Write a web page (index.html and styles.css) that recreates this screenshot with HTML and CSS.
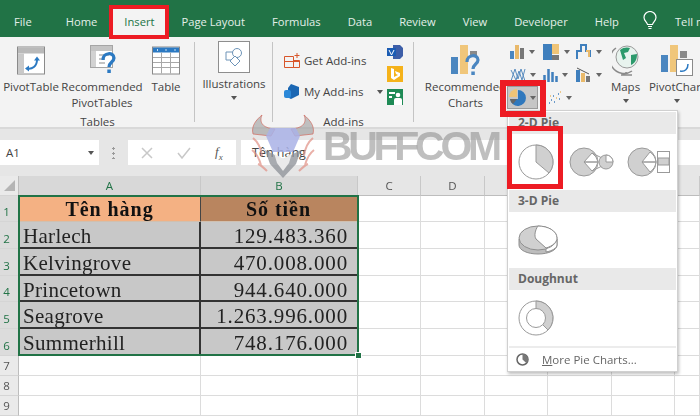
FILE: index.html
```html
<!DOCTYPE html>
<html lang="vi">
<head>
<meta charset="utf-8">
<title>Excel Insert Pie Chart</title>
<link rel="stylesheet" href="styles.css">
</head>
<body>
<div class="app">
  <nav class="tabs">
    <span class="tab tab-file">File</span>
    <span class="tab">Home</span>
    <span class="tab tab-active">Insert</span>
    <span class="tab">Page Layout</span>
    <span class="tab">Formulas</span>
    <span class="tab">Data</span>
    <span class="tab">Review</span>
    <span class="tab">View</span>
    <span class="tab">Developer</span>
    <span class="tab">Help</span>
    <svg class="bulb" width="14" height="20" viewBox="0 0 14 20"><path d="M4.500 13.500C4 11 1 9.500 1 6.500a6 6 0 0 1 12 0c0 3-3 4.500-3.500 7z" fill="none" stroke="#fff" stroke-width="1.200"/><path d="M5 15.500h4M5.500 17.500h3" stroke="#fff" stroke-width="1.200"/></svg>
    <span class="tab tab-tell">Tell me</span>
  </nav>

  <section class="ribbon">
    <div class="group group-tables">
      <div class="group-body">
        <div class="btn btn-pivot">
          <svg width="28" height="28" viewBox="0 0 28 28"><rect x=".5" y=".5" width="27" height="27" fill="#fff" stroke="#8a8a8a"/><rect x="1" y="1" width="26" height="6" fill="#b9b9b9"/><rect x="1" y="7" width="6" height="20" fill="#c9c9c9"/><path d="M10 22c5 1 10-2 10-9" fill="none" stroke="#2b79c2" stroke-width="2"/><path d="M17 14l3-4 3 4zM12 19l-4 3 4 3z" fill="#2b79c2"/></svg>
          <span class="btn-text">PivotTable</span>
        </div>
        <div class="btn btn-rec">
          <svg width="30" height="31" viewBox="0 0 30 31"><rect x="3.500" y=".5" width="22" height="22" fill="#fff" stroke="#a5a5a5"/><rect x="4" y="1" width="21" height="5" fill="#c4c4c4"/><rect x="4" y="6" width="5" height="16" fill="#d2d2d2"/><path d="M12 10h10M12 14h6M12 18h6" stroke="#c4c4c4" stroke-width="2"/><path d="M16 15c0-8 11-8 11-2 0 4-5 4-5 9" fill="none" stroke="#2b79c2" stroke-width="3.200"/><rect x="20.300" y="24.500" width="3.500" height="3.500" fill="#2b79c2"/></svg>
          <span class="btn-text">Recommended<br>PivotTables</span>
        </div>
        <div class="btn btn-table">
          <svg width="28" height="28" viewBox="0 0 28 28"><rect x=".5" y=".5" width="27" height="27" fill="#fff" stroke="#8a8a8a"/><rect x="1" y="1" width="26" height="5" fill="#2b79c2"/><path d="M1 11h26M1 16h26M1 21h26M9.500 6v21M18.500 6v21" stroke="#a8a8a8"/><path d="M5 3.500h1M13.500 3.500h1M22.500 3.500h1" stroke="#fff" stroke-width="1.500"/></svg>
          <span class="btn-text">Table</span>
        </div>
      </div>
      <div class="group-label">Tables</div>
    </div>

    <div class="group group-illus">
      <div class="btn btn-illus">
        <span class="illus-box"><svg width="20" height="20" viewBox="0 0 20 20"><path d="M2 5h9v8H2z" fill="#fff" stroke="#6e94b8"/><circle cx="13" cy="6" r="4.500" fill="#fff" stroke="#6e94b8"/><path d="M11 9l5 5-5 5-5-5z" fill="#fff" stroke="#6e94b8"/></svg></span>
        <span class="btn-text">Illustrations</span>
        <span class="caret caret-drop"></span>
      </div>
    </div>

    <div class="group group-addins">
      <div class="group-body addins-body">
        <div class="addins-list">
          <div class="addin">
            <svg width="17" height="15" viewBox="0 0 17 15"><path d="M.5 3.500h9v11h-9zM9.500 7.500h6v7h-6zM.5 8.500h15" fill="none" stroke="#d8562a"/><path d="M13 0v5M10.500 2.500h5" stroke="#d8562a"/></svg>
            <span>Get Add-ins</span>
          </div>
          <div class="addin">
            <svg width="17" height="15" viewBox="0 0 17 15"><path d="M7 0l8 3v8l-8 4-3-1.500V4z" fill="#1b67b3"/><rect x="0" y="6" width="7" height="8" rx="2" fill="#2b88d8"/></svg>
            <span>My Add-ins</span>
            <span class="caret caret-addin"></span>
          </div>
        </div>
        <div class="addin-apps">
          <svg width="16" height="14" viewBox="0 0 16 14"><path d="M6 0h7l3 3v8l-3 3H6z" fill="#3d5ea8"/><rect y="3" width="9" height="8" fill="#1b5cb3"/><path d="M2 5l2.500 5L7 5" stroke="#fff" fill="none"/></svg>
          <svg width="16" height="16" viewBox="0 0 16 16"><rect width="16" height="16" fill="#f5b21a"/><path d="M4 2l3 1v8l4-2-2-1-1-3 5 2v3l-6 4-3-2z" fill="#fff"/></svg>
          <svg width="16" height="16" viewBox="0 0 16 16"><rect width="16" height="16" fill="#1e8a55"/><rect x="2" y="3" width="6" height="2" fill="#fff"/><circle cx="11" cy="6" r="2.300" fill="#fff"/><path d="M7 16v-5a2 2 0 0 1 2-2h4a2 2 0 0 1 2 2v5z" fill="#fff"/><rect x="2" y="7" width="3" height="2" fill="#fff"/></svg>
        </div>
      </div>
      <div class="group-label">Add-ins</div>
    </div>

    <div class="group-charts">
      <div class="btn btn-reccharts">
        <svg width="30" height="31" viewBox="0 0 30 31"><rect x="0" y="12" width="7" height="17" fill="#4a86c0"/><rect x="9" y="0" width="8" height="29" fill="#f0c67a"/><rect x="19" y="6" width="7" height="5" fill="#8a8a8a"/><path d="M16 17c0-8 11-8 11-2 0 4-5 4-5 9" fill="none" stroke="#4a86c0" stroke-width="3.200"/><rect x="20.300" y="26.500" width="3.500" height="3.500" fill="#4a86c0"/></svg>
        <span class="btn-text">Recommended<br>Charts</span>
      </div>
      <div class="gallery">
        <div class="mini"><svg width="15" height="14" viewBox="0 0 15 14"><rect y="6" width="4" height="8" fill="#4a86c0"/><rect x="5" y="0" width="4" height="14" fill="#e9b96a"/><rect x="10" y="3" width="4" height="11" fill="#777"/></svg><span class="caret"></span></div>
        <div class="mini"><svg width="17" height="16" viewBox="0 0 17 16"><rect width="9" height="16" fill="#3f7fbd"/><rect x="9" width="7" height="10" fill="#efc477"/><rect x="9" y="11" width="7" height="5" fill="#777"/></svg><span class="caret"></span></div>
        <div class="mini"><svg width="16" height="15" viewBox="0 0 16 15"><path d="M1 15V7h4V1h5v6h4v6" fill="none" stroke="#3f7fbd" stroke-width="2"/><path d="M10 7h3v6" fill="none" stroke="#e9b96a" stroke-width="2"/></svg><span class="caret"></span></div>
        <div class="mini"><svg width="16" height="15" viewBox="0 0 16 15"><path d="M1 14L5 2l3 10 3-10 4 12M1 3l5 10 3-9 3 9 3-11" fill="none" stroke="#5a8dc0"/></svg><span class="caret"></span></div>
        <div class="mini"><svg width="15" height="14" viewBox="0 0 15 14"><path d="M1.500 14V7M5.500 14V1M9.500 14V4M13.500 14V8" stroke="#3f7fbd" stroke-width="2.500"/></svg><span class="caret"></span></div>
        <div class="mini"><svg width="16" height="15" viewBox="0 0 16 15"><rect y="3" width="4" height="12" fill="#3f7fbd"/><rect x="5" y="6" width="4" height="9" fill="#e9b96a"/><rect x="10" y="9" width="4" height="6" fill="#777"/><path d="M1 1l12 6" stroke="#555"/></svg><span class="caret"></span></div>
        <div class="mini mini-pie"><svg width="18" height="17" viewBox="0 0 18 17"><path d="M9 1a8 8 0 1 1-8 9h8z" fill="#2f78bd"/><path d="M8 0v8H0a8 8 0 0 1 8-8z" fill="#efc477"/><path d="M1 10h7l-4 5a8 8 0 0 1-3-5z" fill="#666"/></svg><span class="caret"></span></div>
        <div class="mini"><svg width="14" height="13" viewBox="0 0 14 13"><path d="M3 9h1M6 11h1M5 5h1M10 3h1M11 8h1M1 12h1" stroke="#3f7fbd" stroke-width="1.500"/><path d="M8 7h1M2 5h1M12 1h1" stroke="#e9b96a" stroke-width="1.500"/></svg><span class="caret"></span></div>
      </div>
      <div class="btn btn-maps">
        <svg width="28" height="31" viewBox="0 0 28 31"><circle cx="15" cy="12" r="11" fill="#e8f3ee" stroke="#9a9a9a"/><path d="M8 5c3-3 8-3 10-2l-2 4-4 1 2 5-3 2zM19 10l6-1c0 6-2 9-6 11z" fill="#2c9a6c"/><path d="M4 3a13 13 0 0 0 16 23M14 27v3M9 30h11" fill="none" stroke="#8a8a8a" stroke-width="1.500"/></svg>
        <span class="btn-text">Maps</span>
        <span class="caret caret-drop"></span>
      </div>
      <div class="btn btn-pchart">
        <svg width="32" height="31" viewBox="0 0 32 31"><rect y="10" width="7" height="17" fill="#4a86c0"/><rect x="9" width="8" height="27" fill="#f0c67a"/><rect x="19" y="6" width="7" height="7" fill="#8a8a8a"/><rect x="15.500" y="14.500" width="16" height="16" fill="#fff" stroke="#8a8a8a"/><path d="M19 26c5 1 8-2 8-7" fill="none" stroke="#2b79c2" stroke-width="1.500"/></svg>
        <span class="btn-text">PivotChart</span>
        <span class="caret caret-drop"></span>
      </div>
    </div>
  </section>

  <section class="formula-row">
    <div class="name-box"><span>A1</span><span class="caret"></span></div>
    <div class="dots"></div>
    <div class="fx-box">
      <svg width="12" height="12" viewBox="0 0 12 12"><path d="M1 1l10 10M11 1L1 11" stroke="#c8c8c8" stroke-width="1.500"/></svg>
      <svg width="14" height="12" viewBox="0 0 14 12"><path d="M1 6l4 5 8-10" fill="none" stroke="#c8c8c8" stroke-width="1.500"/></svg>
      <span class="fx">f<sub>x</sub></span>
    </div>
    <div class="formula-input">Tên hàng</div>
  </section>

  <section class="sheet">
    <div class="row row-head">
      <div class="rh corner"><span class="corner-tri"></span></div>
      <div class="ch ch-on col-a">A</div><div class="ch ch-on col-b">B</div><div class="ch">C</div><div class="ch">D</div><div class="ch"></div><div class="ch"></div><div class="ch"></div><div class="ch"></div>
    </div>
    <div class="row row-1">
      <div class="rh rh-on">1</div>
      <div class="c head-a">Tên hàng</div><div class="c head-b">Số tiền</div><div class="c"></div><div class="c"></div><div class="c"></div><div class="c"></div><div class="c"></div><div class="c"></div>
    </div>
    <div class="row row-d">
      <div class="rh rh-on">2</div>
      <div class="c name">Harlech</div><div class="c num">129.483.360</div><div class="c"></div><div class="c"></div><div class="c"></div><div class="c"></div><div class="c"></div><div class="c"></div>
    </div>
    <div class="row row-d">
      <div class="rh rh-on">3</div>
      <div class="c name">Kelvingrove</div><div class="c num">470.008.000</div><div class="c"></div><div class="c"></div><div class="c"></div><div class="c"></div><div class="c"></div><div class="c"></div>
    </div>
    <div class="row row-d">
      <div class="rh rh-on">4</div>
      <div class="c name">Princetown</div><div class="c num">944.640.000</div><div class="c"></div><div class="c"></div><div class="c"></div><div class="c"></div><div class="c"></div><div class="c"></div>
    </div>
    <div class="row row-d">
      <div class="rh rh-on">5</div>
      <div class="c name">Seagrove</div><div class="c num">1.263.996.000</div><div class="c"></div><div class="c"></div><div class="c"></div><div class="c"></div><div class="c"></div><div class="c"></div>
    </div>
    <div class="row row-d">
      <div class="rh rh-on">6</div>
      <div class="c name">Summerhill</div><div class="c num">748.176.000</div><div class="c"></div><div class="c"></div><div class="c"></div><div class="c"></div><div class="c"></div><div class="c"></div>
    </div>
    <div class="row row-e">
      <div class="rh">7</div><div class="c"></div><div class="c"></div><div class="c"></div><div class="c"></div><div class="c"></div><div class="c"></div><div class="c"></div><div class="c"></div>
    </div>
    <div class="row row-e">
      <div class="rh">8</div><div class="c"></div><div class="c"></div><div class="c"></div><div class="c"></div><div class="c"></div><div class="c"></div><div class="c"></div><div class="c"></div>
    </div>
    <div class="row row-e">
      <div class="rh">9</div><div class="c"></div><div class="c"></div><div class="c"></div><div class="c"></div><div class="c"></div><div class="c"></div><div class="c"></div><div class="c"></div>
    </div>
    <div class="selection"><span class="handle"></span></div>
  </section>

  <div class="watermark">
    <svg width="66" height="68" viewBox="0 0 66 68"><path d="M3 22C1 14 6 8 12 3c-3 7 0 13 13 14l-4 7zM63 22c2-8-3-14-9-19 3 7 0 13-13 14l4 7z" fill="#9c9c9c" fill-opacity=".6" stroke="#d06a5e" stroke-opacity=".7"/><path d="M20 16h26l4 8-7 16H23l-7-16z" fill="#a9b2e6" opacity=".85"/><path d="M15 38l18 9 18-9-5 14-13 14-13-14z" fill="#8b8f96" opacity=".75"/><path d="M24 41l9 6 9-6-3 10-6 8-6-8z" fill="#f2f2f2" opacity=".9"/><path d="M3 26c5 4 8 10 9 18M63 26c-5 4-8 10-9 18M2 38c4 3 7 8 9 15M64 38c-4 3-7 8-9 15M8 52c3 1 6 4 9 7M58 52c-3 1-6 4-9 7" fill="none" stroke="#e08e83" stroke-width="2" opacity=".7"/></svg>
    <span class="wm-text">BUFFCOM</span>
  </div>

  <aside class="pie-menu">
    <div class="menu-title">2-D Pie</div>
    <div class="menu-items">
      <svg width="36" height="36" viewBox="0 0 36 36"><circle cx="18" cy="18" r="17" fill="#fff" stroke="#9a9a9a"/><path d="M18 1a17 17 0 0 1 13 28L18 18z" fill="#d0d0d0" stroke="#9a9a9a"/></svg>
      <svg class="ofpie" width="45" height="30" viewBox="0 0 45 30"><circle cx="15" cy="15" r="14" fill="#d0d0d0" stroke="#9a9a9a"/><path d="M29 15L15 15l8-9a14 14 0 0 1 6 9zM23 24l-8-9h14a14 14 0 0 1-6 9z" fill="#fff" stroke="#9a9a9a"/><path d="M23 6l12 6M23 24l12-6" stroke="#9a9a9a"/><circle cx="37" cy="15" r="7" fill="#d0d0d0" stroke="#9a9a9a"/><path d="M37 15V8a7 7 0 0 1 7 7z" fill="#fff" stroke="#9a9a9a"/></svg>
      <svg class="barofpie" width="43" height="30" viewBox="0 0 43 30"><circle cx="15" cy="15" r="14" fill="#d0d0d0" stroke="#9a9a9a"/><path d="M29 15H15l8-10a14 14 0 0 1 6 10zM23 25l-8-10h14a14 14 0 0 1-6 10z" fill="#fff" stroke="#9a9a9a"/><rect x="30.500" y="4.500" width="12" height="21" fill="#fff" stroke="#9a9a9a"/><rect x="31" y="11" width="11" height="7" fill="#d0d0d0" stroke="#9a9a9a"/></svg>
    </div>
    <div class="menu-title">3-D Pie</div>
    <div class="menu-items">
      <svg width="40" height="30" viewBox="0 0 40 30"><path d="M1 14v6c0 5 8 9 19 9s19-4 19-9v-6z" fill="#bdbdbd" stroke="#8e8e8e"/><path d="M28 27c6-1 11-4 11-7v-6H28z" fill="#fff" stroke="#8e8e8e"/><ellipse cx="20" cy="13" rx="19" ry="12" fill="#d0d0d0" stroke="#8e8e8e"/><path d="M20 1c10 0 19 5 19 12 0 4-4 8-11 10l-10-9c-2-3-1-9 2-13z" fill="#fff" stroke="#8e8e8e"/></svg>
    </div>
    <div class="menu-title">Doughnut</div>
    <div class="menu-items">
      <svg width="36" height="36" viewBox="0 0 36 36"><circle cx="18" cy="18" r="17" fill="#fff" stroke="#9a9a9a"/><path d="M18 1a17 17 0 0 1 12 29l-6-6a9 9 0 0 0-6-15z" fill="#d0d0d0" stroke="#9a9a9a"/><circle cx="18" cy="18" r="9.500" fill="#fff" stroke="#9a9a9a"/></svg>
    </div>
    <div class="menu-more">
      <svg width="13" height="13" viewBox="0 0 13 13"><circle cx="6.500" cy="6.500" r="5.500" fill="#fff" stroke="#666" stroke-width="1.500"/><path d="M6.500 1a5.500 5.500 0 0 1 4 9.300L6.500 6.500z" fill="#777"/></svg>
      <span><u>M</u>ore Pie Charts...</span>
    </div>
  </aside>

  <div class="mark mark-insert"></div>
  <div class="mark mark-pie"></div>
  <div class="mark mark-item"></div>
</div>
</body>
</html>
```

FILE: styles.css
```css
* { box-sizing: border-box; }
html, body { margin: 0; padding: 0; background: #fff; }
.app {
  position: relative;
  width: 700px;
  height: 416px;
  overflow: hidden;
  font-family: "Open Sans", "Liberation Sans", sans-serif;
  font-size: 11.5px;
  color: #444;
  filter: blur(.45px);
}

/* tabs */
.tabs {
  display: flex;
  align-items: center;
  height: 37px;
  background: #217346;
  color: #e4efe9;
  padding-left: 14px;
  white-space: nowrap;
  font-size: 11.2px;
}
.tab { flex: none; margin-right: 27px; padding-top: 7px; line-height: 30px; }
.tab-file { margin-right: 34px; }
.tab-active { position: relative; isolation: isolate; color: #217346; }
.tab-active::before {
  content: "";
  position: absolute;
  left: -12px;
  right: -10px;
  top: 9px;
  bottom: 0;
  background: #f3f3f3;
  z-index: -1;
}
.bulb { flex: none; margin: 4px 0 0 -3px; }
.tab-tell { margin: 0 0 0 18px; }

/* ribbon */
.ribbon {
  display: flex;
  height: 92px;
  background: #f3f3f3;
  border-bottom: 2px solid #d9d9d9;
}
.group {
  display: flex;
  flex-direction: column;
  position: relative;
  padding-top: 8px;
}
.group::after {
  content: "";
  position: absolute;
  right: 0;
  top: 5px;
  bottom: 5px;
  width: 1px;
  background: #c4c4c4;
}
.group-body { display: flex; flex: none; height: 67px; }
.group-label { height: 15px; line-height: 19px; text-align: center; }
.group-tables { width: 195px; }
.group-illus { width: 78px; }
.group-addins { width: 141px; }
.btn { display: flex; flex-direction: column; align-items: center; line-height: 16px; }
.btn > svg { flex: none; height: 31px; margin-bottom: 3px; }
.btn-text { text-align: center; white-space: nowrap; }
.btn-pivot { width: 62px; }
.btn-rec { width: 80px; }
.btn-table { width: 48px; }
.btn-illus { width: 78px; margin-top: -4px; }
.illus-box {
  display: flex;
  align-items: center;
  justify-content: center;
  width: 32px;
  height: 32px;
  background: #fff;
  border: 1px solid #8e8e8e;
  margin-bottom: 3px;
}

/* add-ins */
.addins-body { padding-left: 11px; }
.addins-list { display: flex; flex-direction: column; width: 103px; padding-top: 8px; gap: 16px; }
.addin { display: flex; align-items: center; gap: 3px; height: 15px; white-space: nowrap; }
.addin-apps { display: flex; flex-direction: column; gap: 7px; align-items: flex-start; }
.caret {
  display: inline-block;
  flex: none;
  width: 0;
  height: 0;
  border-left: 3.5px solid transparent;
  border-right: 3.5px solid transparent;
  border-top: 4px solid #555;
}
.caret-drop { margin-top: 4px; }
.caret-addin { margin-left: 10px; }

/* charts */
.group-charts {
  display: flex;
  flex: 1;
  padding: 8px 0 0 10px;
  white-space: nowrap;
  min-width: 0;
}
.btn-reccharts { width: 83px; flex: none; }
.gallery {
  display: grid;
  grid-template-columns: repeat(3, 33px);
  grid-auto-rows: 23px;
  width: 99px;
  flex: none;
  align-content: start;
  margin-top: -5px;
}
.mini { display: flex; align-items: center; gap: 4px; padding-left: 3px; }
.mini .caret { border-top-color: #666; }
.mini-pie { background: #c6c6c6; outline: 1px solid #9a9a9a; margin: 1px 3px 1px 1px; padding-left: 1px; gap: 3px; }
.gallery .mini:nth-child(8) { padding-left: 8px; }
.btn-maps { width: 43px; flex: none; margin-left: -2px; }
.btn-pchart { width: 68px; flex: none; margin-left: -4px; }

/* formula row */
.formula-row {
  display: flex;
  align-items: center;
  height: 47px;
  background: #e6e6e6;
}
.name-box {
  display: flex;
  align-items: center;
  justify-content: space-between;
  width: 99px;
  height: 25px;
  background: #fff;
  padding: 0 5px 0 6px;
}
.dots {
  width: 3px;
  height: 13px;
  margin: 0 13px;
  background: radial-gradient(circle, #999 1px, transparent 1.200px) 0 0 / 3px 5px;
}
.fx-box {
  display: flex;
  align-items: center;
  gap: 24px;
  width: 108px;
  height: 25px;
  background: #fff;
  padding-left: 13px;
}
.fx { font: italic 13px "Liberation Serif", serif; color: #555; }
.fx sub { font-size: 9px; }
.formula-input {
  flex: 1;
  height: 25px;
  line-height: 25px;
  margin-left: 5px;
  background: #fff;
  padding-left: 11px;
  font-size: 12.5px;
}

/* sheet */
.sheet { position: relative; }
.row {
  display: grid;
  grid-template-columns: 19px 182px 157px 63px 64px 63px 64px 63px 1fr;
  grid-template-rows: minmax(0, 1fr);
}
.row-head { height: 20px; }
.row-1 { height: 26px; }
.row-d { height: 27px; }
.row-e { height: 20px; }
.row-d:nth-child(5) { height: 26px; }
.ch {
  background: #e6e6e6;
  border-right: 1px solid #c8c8c8;
  border-bottom: 1px solid #bdbdbd;
  text-align: center;
  line-height: 19px;
  color: #555;
}
.ch-on { color: #217346; background: #d8d8d8; }
.corner { position: relative; background: #e6e6e6; }
.corner-tri {
  position: absolute;
  right: 3px;
  bottom: 4px;
  border-left: 11px solid transparent;
  border-bottom: 11px solid #b5b5b5;
}
.rh {
  background: #eaeaea;
  border-right: 1px solid #bdbdbd;
  border-bottom: 1px solid #d5d5d5;
  padding-right: 5px;
  display: flex;
  align-items: flex-end;
  justify-content: center;
  line-height: 18px;
  color: #555;
}
.rh-on { color: #217346; background: #dcdcdc; }
.c {
  border-right: 1px solid #dcdcdc;
  border-bottom: 1px solid #dcdcdc;
  font-family: "Liberation Serif", serif;
  font-size: 21px;
  line-height: 28px;
  color: #222;
  white-space: nowrap;
}
.head-a, .head-b { font-weight: bold; text-align: center; color: #111; border-color: #444; border-bottom-color: #d0c0b0; font-size: 20px; letter-spacing: .95px; line-height: 26px; }
.head-a { background: #f4b183; }
.head-b { background: #b9855f; border-right: 0; padding-right: 2px; }
.name { background: #c8c8c8; padding-left: 4px; border-right: 2px solid #333; border-bottom: 2px solid #333; letter-spacing: .3px; }
.num { background: #c8c8c8; text-align: right; padding-right: 10px; border-right: 0; border-bottom: 2px solid #333; letter-spacing: .85px; }
.selection {
  position: absolute;
  left: 18px;
  top: 19px;
  width: 341px;
  height: 161px;
  border: 2px solid #217346;
}
.handle {
  position: absolute;
  right: -5px;
  bottom: -5px;
  width: 7px;
  height: 7px;
  background: #217346;
  border: 1px solid #fff;
}

/* watermark */
.watermark {
  position: absolute;
  left: 250px;
  top: 112px;
  display: flex;
  align-items: center;
  gap: 7px;
  pointer-events: none;
}
.wm-text {
  font: bold 41px/30px "Liberation Sans", sans-serif;
  letter-spacing: -4.300px;
  color: rgba(128, 128, 128, .5);
}

/* menu */
.pie-menu {
  position: absolute;
  left: 507px;
  top: 110px;
  width: 171px;
  height: 262px;
  background: #fff;
  border: 1px solid #d0d0d0;
  box-shadow: 1px 2px 3px rgba(0, 0, 0, .25);
  padding: 1px;
  display: flex;
  flex-direction: column;
}
.menu-title {
  height: 22px;
  line-height: 22px;
  background: #e9e9e9;
  padding-left: 9px;
  font-size: 12px;
  font-weight: 700;
  color: #666;
}
.menu-items { display: flex; align-items: center; height: 56px; padding-left: 9px; gap: 13px; }
.menu-more {
  display: flex;
  align-items: center;
  gap: 13px;
  flex: 1;
  padding-left: 7px;
  border-top: 2px solid #ececec;
  color: #666;
}
.ofpie { margin-left: 2px; }

/* red annotations */
.mark { position: absolute; border: 5px solid #ed1c24; }
.mark-insert { left: 109px; top: 5px; width: 60px; height: 34px; border-width: 4px; }
.mark-pie { left: 500px; top: 80px; width: 46px; height: 37px; border-width: 6px; }
.mark-item { left: 507px; top: 126px; width: 56px; height: 63px; }
```
